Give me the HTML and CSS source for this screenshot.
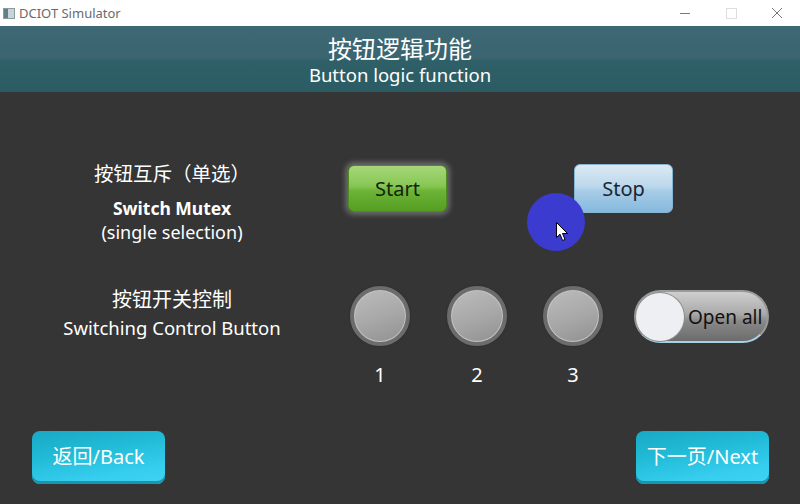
FILE: index.html
```html
<!DOCTYPE html>
<html lang="zh-CN">
  <head>
    <meta charset="UTF-8" />
    <title>DCIOT Simulator</title>
    <link rel="stylesheet" href="styles.css">
  </head>
  <body>
    <div class="window">
      <div class="titlebar">
        <div class="app">
          <span class="app-icon"></span>
          <span class="app-name">DCIOT Simulator</span>
        </div>
        <div class="win-buttons">
          <span class="win-btn min"></span>
          <span class="win-btn max"></span>
          <span class="win-btn close">
            <svg width="12" height="12" viewBox="0 0 12 12">
              <path d="M1 1 L11 11 M11 1 L1 11" stroke="#777" stroke-width="1" fill="none" />
            </svg>
          </span>
        </div>
      </div>

      <div class="header">
        <div class="title">按钮逻辑功能</div>
        <div class="subtitle">Button logic function</div>
      </div>

      <div class="main">
        <div class="row row-mutex">
          <div class="label">
            <div class="label-zh">按钮互斥（单选）</div>
            <div class="label-en bold">Switch Mutex</div>
            <div class="label-en">(single selection)</div>
          </div>
          <div class="controls">
            <button class="btn-start">Start</button>
            <button class="btn-stop">Stop</button>
          </div>
        </div>

        <div class="row row-switch">
          <div class="label">
            <div class="label-zh tall">按钮开关控制</div>
            <div class="label-en tall">Switching Control Button</div>
          </div>
          <div class="controls">
            <div class="lamp">
              <span class="lamp-knob"></span>
              <span class="lamp-num">1</span>
            </div>
            <div class="lamp">
              <span class="lamp-knob"></span>
              <span class="lamp-num">2</span>
            </div>
            <div class="lamp">
              <span class="lamp-knob"></span>
              <span class="lamp-num">3</span>
            </div>
            <div class="toggle">
              <span class="toggle-knob"></span>
              <span class="toggle-text">Open all</span>
            </div>
          </div>
        </div>

        <div class="footer">
          <button class="nav-btn">返回/Back</button>
          <button class="nav-btn">下一页/Next</button>
        </div>

        <!-- click highlight under the mouse pointer -->
        <div class="touch">
          <svg class="cursor" width="13" height="20" viewBox="0 0 13 20">
            <path d="M0.5 0.5 L0.5 15.5 L4 12.2 L6.6 18.5 L9 17.5 L6.5 11.5 L11.5 11.5 Z" fill="#fff" stroke="#000" stroke-width="1" />
          </svg>
        </div>
      </div>
    </div>
  </body>
</html>
```

FILE: styles.css
```css
body {
  margin: 0;
  font-family: "Noto Sans", "Noto Sans CJK SC", sans-serif;
  background-color: #353535;
}

.window {
  width: 800px;
  height: 504px;
  display: flex;
  flex-direction: column;
  overflow: hidden;
}

/* ---- title bar ---- */
.titlebar {
  height: 26px;
  background: #fff;
  display: flex;
  justify-content: space-between;
  align-items: center;
  flex-shrink: 0;
}

.app {
  display: flex;
  align-items: center;
  padding-left: 3px;
  gap: 4px;
}

.app-icon {
  width: 10px;
  height: 9px;
  border: 1px solid #8a9aa0;
  background: linear-gradient(90deg, #5f7f87 0 45%, #c6d4d8 45% 100%);
}

.app-name {
  font-size: 13px;
  color: #6a6a6a;
}

.win-buttons {
  display: flex;
  align-items: center;
  height: 100%;
}

.win-btn {
  width: 46px;
  height: 26px;
  display: flex;
  align-items: center;
  justify-content: center;
}

.win-btn.min::before {
  content: "";
  width: 10px;
  height: 1px;
  background: #777;
}

.win-btn.max::before {
  content: "";
  width: 9px;
  height: 9px;
  border: 1px solid #ddd;
}

/* ---- header ---- */
.header {
  height: 66px;
  flex-shrink: 0;
  background: linear-gradient(#3e6873 0%, #3a6570 50%, #2f6068 52%, #2b5c63 100%);
  color: #fff;
  text-align: center;
}

.title {
  font-size: 24px;
  line-height: 28px;
  padding-top: 9px;
}

.subtitle {
  font-size: 18.5px;
  line-height: 24px;
}

/* ---- main area ---- */
.main {
  flex: 1;
  position: relative;
  padding-top: 69px;
  color: #fff;
}

.row {
  display: flex;
  align-items: flex-start;
}

.row-switch {
  margin-top: 42px;
}

.label {
  width: 344px;
  text-align: center;
}

.label-zh {
  font-size: 19.5px;
  line-height: 26px;
  margin-bottom: 9px;
}

.label-en {
  font-size: 18px;
  line-height: 24px;
}

.label-en.bold {
  font-size: 17.5px;
  font-weight: bold;
}

.label-zh.tall {
  font-size: 20px;
  line-height: 28px;
  margin-bottom: 0;
}

.label-en.tall {
  font-size: 18.5px;
  line-height: 28px;
}

.controls {
  display: flex;
  align-items: flex-start;
}

button {
  font-family: inherit;
  cursor: pointer;
  padding: 0;
}

.btn-start {
  width: 99px;
  height: 47px;
  margin-top: 4px;
  margin-left: 4px;
  border: 1px solid #4f8a24;
  border-radius: 6px;
  background: linear-gradient(#a6d87a 0%, #86c653 45%, #6cb436 55%, #549e22 100%);
  box-shadow: 0 0 5px 3px rgba(150, 150, 150, 0.55);
  color: #14240c;
  font-size: 20px;
}

.btn-stop {
  width: 99px;
  height: 49px;
  margin-top: 3px;
  margin-left: 127px;
  border: 1px solid #86b5d4;
  border-radius: 6px;
  background: linear-gradient(#dbe9f3 0%, #bdd8ec 45%, #a7cce7 55%, #86b9de 100%);
  color: #1a2634;
  font-size: 20px;
}

/* round lamp buttons */
.lamp {
  width: 60px;
  display: flex;
  flex-direction: column;
  align-items: center;
  margin-left: 37px;
}

.lamp:first-child {
  margin-left: 6px;
}

.lamp:nth-child(3) {
  margin-left: 36px;
}

.lamp-knob {
  width: 52px;
  height: 52px;
  border-radius: 50%;
  border: 4px solid #6c6c6c;
  background: linear-gradient(160deg, #bcbcbc 0%, #a9a9a9 50%, #909090 100%);
  box-shadow: inset 0 0 0 1px #c4c4c4, 0 0 2px #2a2a2a;
}

.lamp-num {
  margin-top: 17px;
  font-size: 20px;
  line-height: 24px;
}

/* toggle switch */
.toggle {
  width: 131px;
  height: 49px;
  margin-top: 4px;
  margin-left: 31px;
  border: 2px solid #9a9a9a;
  border-bottom-color: #a6d2e6;
  border-radius: 27px;
  background: linear-gradient(#cfcfcf 0%, #a9a9a9 45%, #888 60%, #6c6c6c 100%);
  display: flex;
  align-items: center;
}

.toggle-knob {
  width: 48px;
  height: 48px;
  border-radius: 50%;
  background: #eeeff3;
  box-shadow: 0 0 0 1px #8c8c8c;
  flex-shrink: 0;
}

.toggle-text {
  margin-left: 4px;
  color: #111;
  font-size: 19px;
}

/* footer navigation */
.footer {
  display: flex;
  justify-content: space-between;
  padding: 44px 31px 0 32px;
}

.nav-btn {
  width: 133px;
  height: 53px;
  padding-bottom: 4px;
  border: none;
  border-radius: 8px;
  background: linear-gradient(170deg, #18a8c4 0%, #22bcd8 40%, #36cdee 75%, #40d3f5 100%);
  box-shadow: inset 0 -3px 0 #1896ae;
  color: #fff;
  font-size: 20px;
}

/* pointer overlay */
.touch {
  position: absolute;
  left: 527px;
  top: 101px;
  width: 58px;
  height: 58px;
  border-radius: 50%;
  background: #3b3bcf;
}

.cursor {
  position: absolute;
  left: 29px;
  top: 29px;
}
```
